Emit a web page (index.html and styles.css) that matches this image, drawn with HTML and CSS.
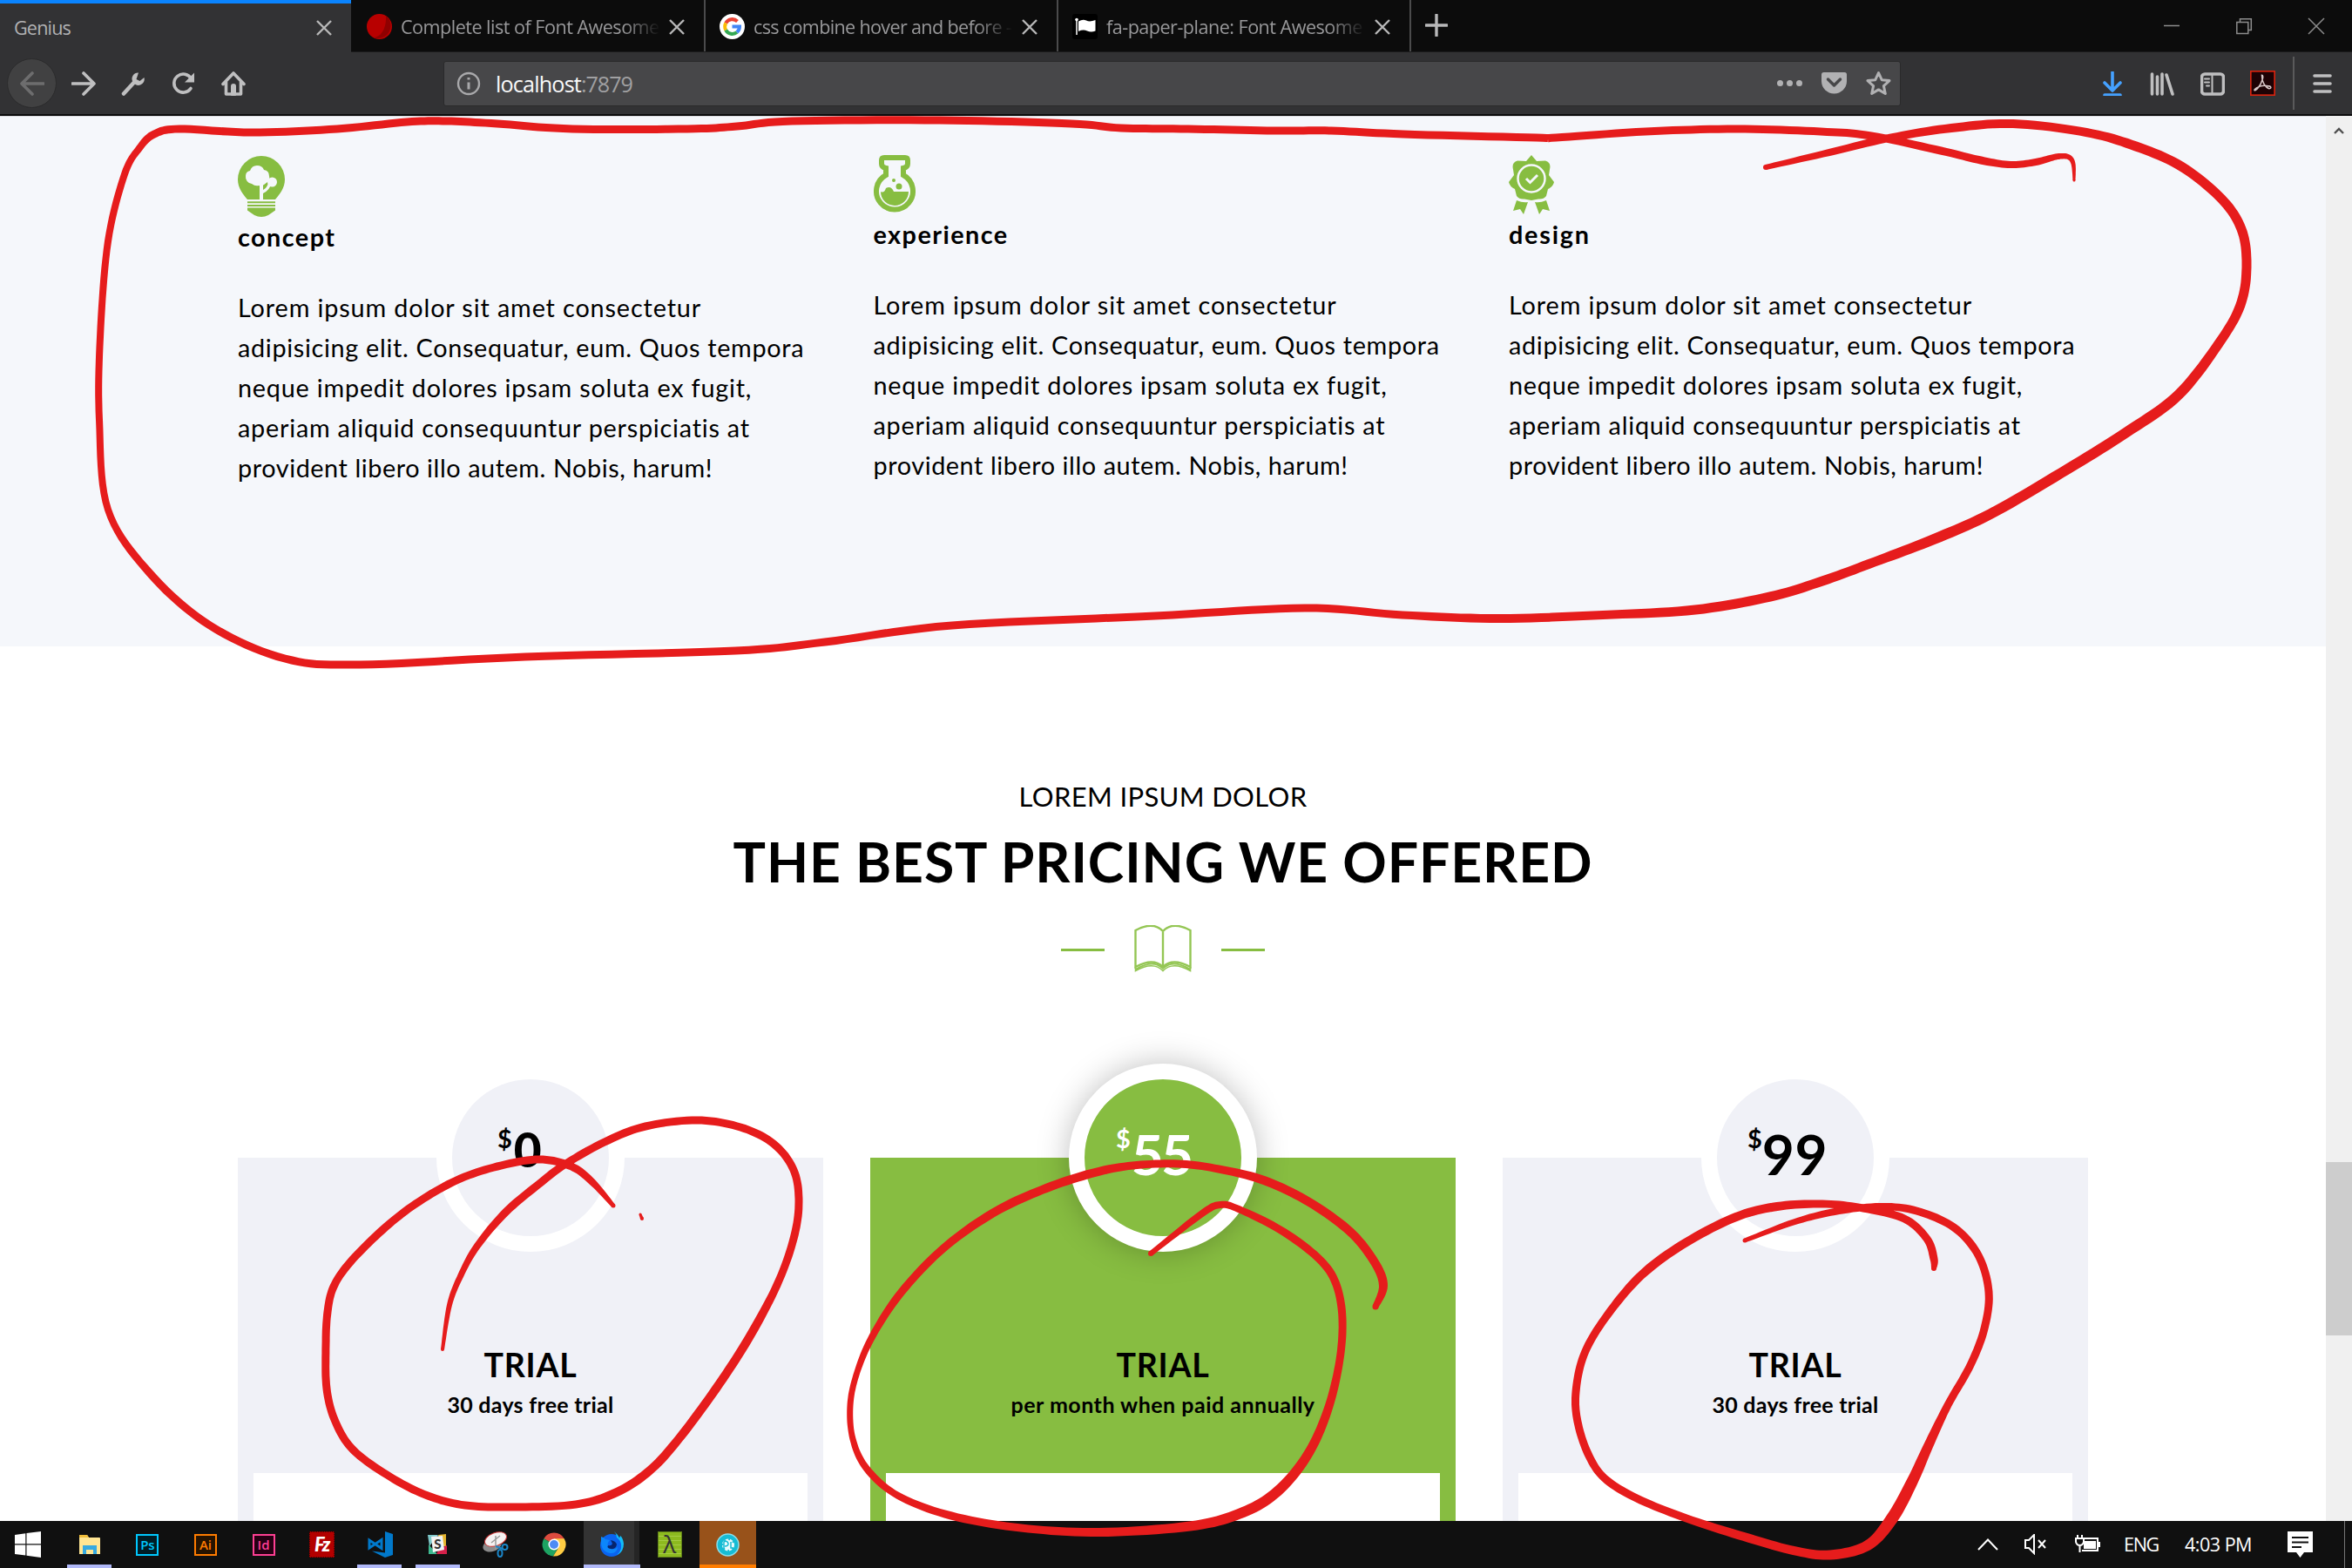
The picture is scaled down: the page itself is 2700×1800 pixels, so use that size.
FILE: index.html
```html
<!DOCTYPE html>
<html lang="en">
<head>
<meta charset="utf-8">
<title>Genius</title>
<link rel="stylesheet" href="styles.css">
</head>
<body>
<div class="screen">
  <header class="tabs">
    <div class="tab active"><span class="label t-genius">Genius</span><svg class="x" viewBox="0 0 18 18"><path d="M1 1l16 16M17 1L1 17"/></svg></div>
    <div class="tab"><svg class="fav" viewBox="0 0 29 29"><circle cx="14.500" cy="14.500" r="14.500" fill="#b80000"/><path d="M22 2a14.500 14.500 0 0 1-14 25c8 0 15-10 14-25z" fill="#8f0000"/></svg><span class="label fade t-list">Complete list of Font Awesome</span><svg class="x" viewBox="0 0 18 18"><path d="M1 1l16 16M17 1L1 17"/></svg></div>
    <div class="tab"><svg class="fav" viewBox="0 0 29 29"><circle cx="14.500" cy="14.500" r="14.500" fill="#fff"/><g fill="none" stroke-width="4"><path d="M20.500 8.500A8.500 8.500 0 0 0 7.200 10.500" stroke="#ea4335"/><path d="M7.200 10.500a8.500 8.500 0 0 0 0 8" stroke="#fbbc05"/><path d="M7.200 18.500a8.500 8.500 0 0 0 12.800 2.500" stroke="#34a853"/><path d="M20 21a8.500 8.500 0 0 0 3-6.500h-8.500" stroke="#4285f4"/></g></svg><span class="label fade t-css">css combine hover and before -</span><svg class="x" viewBox="0 0 18 18"><path d="M1 1l16 16M17 1L1 17"/></svg></div>
    <div class="tab"><svg class="fav" viewBox="0 0 29 29"><rect width="29" height="29" rx="3" fill="#000"/><path d="M5 6v18" stroke="#fff" stroke-width="1.500"/><circle cx="5" cy="6.500" r="1.800" fill="#fff"/><path d="M7 8.500q5-3 9-1t10.500-.5v12.500q-5 2-9.500 0T7 20z" fill="#fff"/></svg><span class="label fade t-list">fa-paper-plane: Font Awesome</span><svg class="x" viewBox="0 0 18 18"><path d="M1 1l16 16M17 1L1 17"/></svg></div>
    <svg class="plus" viewBox="0 0 26 26"><path d="M13 1v24M1 13h24"/></svg>
    <div class="window-buttons">
      <svg viewBox="0 0 18 18"><path d="M0 8.500h18"/></svg>
      <svg viewBox="0 0 18 18"><path d="M.8 4.500h13v13h-13zM4.500 4.500V.8h12.800v12.800h-3.500"/></svg>
      <svg viewBox="0 0 18 18"><path d="M0 0l18 18M18 0L0 18"/></svg>
    </div>
  </header>

  <nav class="toolbar">
    <div class="tools">
      <span class="back"><svg class="ico dim" viewBox="0 0 28 28"><path d="M27 14H2M14 2L2 14l12 12"/></svg></span>
      <svg class="ico" viewBox="0 0 28 28"><path d="M1 14h25M14 2l12 12-12 12"/></svg>
      <svg class="ico" viewBox="0 0 28 28"><path d="M3 25.500L14.500 13" stroke-width="4.500"/><path d="M20 1.500a7 7 0 0 0-6.500 10.500l3 3A7 7 0 0 0 26.500 7l-5 4-4-2z" fill="#bfbfc0" stroke="none"/></svg>
      <svg class="ico" viewBox="0 0 28 28"><path d="M22 19.500A10.500 10.500 0 1 1 22.500 8.500"/><path d="M26 1.500v11H15z" fill="#bfbfc0" stroke="none"/></svg>
      <svg class="ico" viewBox="0 0 28 28"><path d="M2 14.500L14 2l12 12.500M5.500 12v14h17V12"/><path d="M14 26v-9" stroke-width="6"/></svg>
    </div>
    <div class="address">
      <svg class="info" viewBox="0 0 28 28"><circle cx="14" cy="14" r="12"/><path d="M14 12.500v8M14 7v2.500" stroke-width="3"/></svg>
      <span class="url"><span class="host">localhost</span><span class="port">:7879</span></span>
      <div class="page-actions">
        <svg viewBox="0 0 29 29"><g fill="#b1b1b3"><circle cx="3.500" cy="14.500" r="3.500"/><circle cx="14.500" cy="14.500" r="3.500"/><circle cx="25.500" cy="14.500" r="3.500"/></g></svg>
        <svg viewBox="0 0 29 29"><path d="M2.500 2h24q2.500 0 2.500 2.500V12a14.500 14.500 0 0 1-29 0V4.500Q0 2 2.500 2z" fill="#b1b1b3"/><path d="M7.500 10l7 7 7-7" fill="none" stroke="#474749" stroke-width="3.500" stroke-linecap="round" stroke-linejoin="round"/></svg>
        <svg viewBox="0 0 29 29"><path d="M14.500 2.500l3.700 8.200 8.800.9-6.600 6 1.900 8.900-7.800-4.600-7.800 4.600 1.900-8.900-6.600-6 8.800-.9z" fill="none" stroke="#b1b1b3" stroke-width="3" stroke-linejoin="round"/></svg>
      </div>
    </div>
    <div class="extras">
      <svg class="ico blue" viewBox="0 0 28 28"><path d="M14 1v20M5 13l9 9 9-9M5 27h18"/></svg>
      <svg class="ico" viewBox="0 0 28 28"><path d="M2.500 3v23M8.500 6v20M14 3v23M19 4l7 22"/></svg>
      <svg class="ico" viewBox="0 0 28 28"><rect x="1.500" y="3" width="25" height="23" rx="3.500"/><path d="M13.500 3v23M5 8.500h5M5 12.500h5M7 16.500h3" stroke-width="2"/></svg>
      <svg class="pdf" viewBox="0 0 28 28"><rect x=".8" y=".8" width="26.400" height="26.400" fill="#1d0205" stroke="#d6230f" stroke-width="1.600"/><path d="M13 5c3 0 0 9-4 14-2 3-5 4-4 2 2-3 9-5 14-4 5 0 5 3 2 3-4-1-8-7-8-15z" fill="none" stroke="#d9c9c9" stroke-width="1.500"/></svg>
      <span class="rule"></span>
      <svg class="ico menu" viewBox="0 0 22 22"><path d="M2 2h18M2 11h18M2 20h18"/></svg>
    </div>
  </nav>

  <div class="viewport">
    <main class="page">
      <section class="features">
        <article class="feature">
          <svg class="bulb" viewBox="0 0 54 70"><path d="M27 0a27 27 0 0 1 27 27c0 10-6 17-11 23H11C6 44 0 37 0 27A27 27 0 0 1 27 0z" fill="#87bd41"/><path d="M11 53.200h32M11 57h32" stroke="#87bd41" stroke-width="2"/><path d="M11 59.500h32v3L35 68q-8 4-16 0l-8-5.500z" fill="#87bd41"/><g fill="#f5f7fb"><path d="M16 32a8 8 0 0 1-7-9q0-5 5-6 2-6 8-6 6 0 8 5 6 1 6 7 1 4-2 7l-4 3q-3 2-6 1-4 1-8-2z"/><circle cx="39.500" cy="30" r="5.500"/><path d="M25 30h4v9q5-3 6-8l3 1q-1 7-9 11v7h-4z"/></g></svg>
          <h3 class="t-concept">concept</h3>
          <p class="copy"><span class="l1">Lorem ipsum dolor sit amet consectetur</span> <span class="l2">adipisicing elit. Consequatur, eum. Quos tempora</span> <span class="l3">neque impedit dolores ipsam soluta ex fugit,</span> <span class="l4">aperiam aliquid consequuntur perspiciatis at</span> <span class="l5">provident libero illo autem. Nobis, harum!</span></p>
        </article>
        <article class="feature">
          <svg class="flask" viewBox="0 0 48 66"><path d="M12 3h24q3 0 3 3v4q0 4-5 5v8a21 21 0 1 1-20 0v-8q-5-1-5-5V6q0-3 3-3z" fill="none" stroke="#87bd41" stroke-width="6"/><path d="M8 42q4 2 6-4 6-3 9 4l17 0a16 16 0 0 1-32 0z" fill="#87bd41"/><circle cx="29" cy="36" r="3.500" fill="#87bd41"/><circle cx="23" cy="29" r="2" fill="#87bd41"/></svg>
          <h3 class="t-concept">experience</h3>
          <p class="copy"><span class="l1">Lorem ipsum dolor sit amet consectetur</span> <span class="l2">adipisicing elit. Consequatur, eum. Quos tempora</span> <span class="l3">neque impedit dolores ipsam soluta ex fugit,</span> <span class="l4">aperiam aliquid consequuntur perspiciatis at</span> <span class="l5">provident libero illo autem. Nobis, harum!</span></p>
        </article>
        <article class="feature">
          <svg class="ribbon" viewBox="0 0 52 68"><path d="M26 0l6 7 10-.5q7 2 5 10L46 23l6 8q-1 5-7 8l-2 8q-3 4-9 3.500L26 52l-8-1.500Q12 51 9 47l-2-8Q1 36 0 31l6-8-1-6.500Q3 8.500 10 6.500L20 7z" fill="#87bd41"/><circle cx="26" cy="27" r="15.500" fill="none" stroke="#f5f7fb" stroke-width="2.500"/><path d="M20 27l4.500 4.500L33 23" fill="none" stroke="#f5f7fb" stroke-width="3"/><path d="M9 52q7 3 13 2l-5 14-4-6-8 2zM43 52q-7 3-13 2l5 14 4-6 8 2z" fill="#87bd41"/></svg>
          <h3 class="t-design">design</h3>
          <p class="copy"><span class="l1">Lorem ipsum dolor sit amet consectetur</span> <span class="l2">adipisicing elit. Consequatur, eum. Quos tempora</span> <span class="l3">neque impedit dolores ipsam soluta ex fugit,</span> <span class="l4">aperiam aliquid consequuntur perspiciatis at</span> <span class="l5">provident libero illo autem. Nobis, harum!</span></p>
        </article>
      </section>

      <section class="pricing">
        <p class="eyebrow">LOREM IPSUM DOLOR</p>
        <h2>THE BEST PRICING WE OFFERED</h2>
        <div class="divider"><i></i><svg viewBox="0 0 66 54"><path d="M1.500 6Q22-5 33 7 44-5 64.500 6v42Q44 37 33 48 22 37 1.500 48z" stroke-width="2.400"/><path d="M33 8v40" stroke-width="2.400"/><path d="M1.500 48v4.500Q22 41 33 52.500 44 41 64.500 52.500V48M2 50.500Q22 39 33 50 44 39 64 50.500" stroke-width="1.600"/></svg><i></i></div>
        <div class="plans">
          <article class="plan">
            <div class="badge zero"><sup>$</sup><b>0</b></div>
            <h4>TRIAL</h4>
            <p class="term t-days">30 days free trial</p>
            <div class="sheet"></div>
          </article>
          <article class="plan featured">
            <div class="badge"><sup>$</sup><b>55</b></div>
            <h4>TRIAL</h4>
            <p class="term t-month">per month when paid annually</p>
            <div class="sheet"></div>
          </article>
          <article class="plan">
            <div class="badge wide"><sup>$</sup><b>99</b></div>
            <h4>TRIAL</h4>
            <p class="term t-days">30 days free trial</p>
            <div class="sheet"></div>
          </article>
        </div>
      </section>
    </main>
    <aside class="scrollbar"><svg viewBox="0 0 12 8"><path d="M1 7l5-5 5 5"/></svg><div class="thumb"></div></aside>
  </div>

  <footer class="taskbar">
    <div class="start"><svg width="30" height="30" viewBox="0 0 30 30"><path d="M0 4l12.300-1.700v12H0zM13.500 2L30 0v14.300H13.500zM0 15.500h12.300v12L0 26zM13.500 15.500H30V30l-16.500-2.200z" fill="#fff"/></svg></div>
    <div class="app open"><svg width="26" height="24" viewBox="0 0 26 24"><path d="M1 1h9l2 3h12q1 0 1 1v18H1z" fill="#ffe593"/><path d="M1 1h9l2 3H1z" fill="#f0bd3b"/><path d="M5 23V13h16v10h-4v-5H9v5z" fill="#35a9e1"/></svg></div>
    <div class="app"><span class="adobe ps">Ps</span></div>
    <div class="app"><span class="adobe ai">Ai</span></div>
    <div class="app"><span class="adobe id">Id</span></div>
    <div class="app"><span class="fz">Fz</span></div>
    <div class="app open"><svg width="30" height="30" viewBox="0 0 30 30"><path d="M21 0l9 3v24l-9 3L6 22.500l15 2z" fill="#0179cb"/><path d="M17 9.500v10L3 10v9z" fill="none" stroke="#0179cb" stroke-width="3"/></svg></div>
    <div class="app open"><svg width="26" height="26" viewBox="0 0 26 26"><path d="M2 2h12L4 15z" fill="#7ec8c9"/><path d="M14 2l9-1v14h-5z" fill="#e6b52f"/><path d="M3 13v11h10z" fill="#3eb890"/><path d="M12 24h12V14l-9 4z" fill="#d5204a"/><path d="M6 4l13-1 2 16-13 3z" fill="#f4f4f4"/><text x="13.500" y="18" text-anchor="middle" font-family="Lato" font-weight="900" font-size="15" fill="#333">S</text></svg></div>
    <div class="app"><svg width="30" height="30" viewBox="0 0 30 30"><ellipse cx="11" cy="16" rx="11" ry="7" fill="#8b8b8b" transform="rotate(-20 11 16)"/><ellipse cx="15" cy="9" rx="13" ry="7.500" fill="#f5f2f2" stroke="#c33" transform="rotate(-20 15 9)"/><path d="M10 13l10-8M15 5v16" stroke="#999" stroke-width="1.500"/><path d="M15 17l8 3" stroke="#1b86c8" stroke-width="2"/><circle cx="25.500" cy="18" r="3" fill="none" stroke="#1b86c8" stroke-width="2"/><ellipse cx="20" cy="25" rx="2.500" ry="4" fill="none" stroke="#1b86c8" stroke-width="2"/></svg></div>
    <div class="app"><svg width="28" height="28" viewBox="0 0 28 28"><path d="M14 14L2.300 7.200A13.500 13.500 0 0 1 25.700 7.300z" fill="#dd4b3e"/><path d="M14 14L2.300 7.200A13.500 13.500 0 0 0 13 27.500l6-10z" fill="#1da362"/><path d="M14 14l5 4-6 9.500A13.500 13.500 0 0 0 25.700 7.300H14z" fill="#ffcd43"/><circle cx="14" cy="14" r="6.500" fill="#fff"/><circle cx="14" cy="14" r="5" fill="#4c8bf5"/></svg></div>
    <div class="app current"><svg width="28" height="30" viewBox="0 0 28 30"><circle cx="14" cy="16" r="13" fill="#0a63f0"/><path d="M17 0q3 3 3 7 6 4 5 12a12 12 0 0 1-5 8q8-3 8-13-1-7-4-9l-1 3q-2-5-6-8z" fill="#12bdf8"/><path d="M2 6q4 1 5 3l5 1q-5 5 0 9 5 3 9-1-1 8-9 7Q3 23 2 14z" fill="#0c86fb"/><path d="M13 10q6 1 7 5-1 6-7 5-5-1-3-4 4 1 5-2z" fill="#07256e"/></svg></div>
    <div class="app"><span class="lambda">λ</span></div>
    <div class="app alert"><svg width="27" height="27" viewBox="0 0 27 27"><circle cx="13.500" cy="13.500" r="12.500" fill="#16bcd4" stroke="#8ddde8" stroke-width="1.500"/><circle cx="14" cy="13.500" r="5.500" fill="#e9fbfd" stroke="#e9fbfd" stroke-width="3" stroke-dasharray="3 1.500"/><path d="M9 18v-8q4-2 5 2 0 3-4 3M17 10v7h3" fill="none" stroke="#16bcd4" stroke-width="1.500"/></svg></div>
    <div class="tray">
      <svg class="chev" viewBox="0 0 24 14"><path d="M1 13L12 1.500 23 13"/></svg>
      <svg class="spk" viewBox="0 0 26 24"><path d="M1 7h4l6-6v21l-6-6H1zM16 7l8 9M24 7l-8 9"/></svg>
      <svg class="bat" viewBox="0 0 30 22"><path d="M8 4h18v14H8M28 8v6" /><path d="M10 7h14v9H10z" fill="#fff" stroke="none"/><path d="M1 4h9v4q-1 4-4.500 4T1 8zM3 0v4M8 0v4M5.500 12v8" fill="#101010"/></svg>
      <span class="lang">ENG</span>
      <span class="clock">4:03 PM</span>
      <svg class="note" viewBox="0 0 29 30"><path d="M0 0h29v24H19l-4.500 6-4.500-6H0z" fill="#fff"/><path d="M5 7h19M5 12.500h19M5 18h11" stroke="#101010" stroke-width="2"/></svg>
      <span class="peek"></span>
    </div>
  </footer>

  <svg class="ink" viewBox="0 0 2700 1800" aria-hidden="true"></svg>
</div>
<script src="ink.js"></script>
</body>
</html>
```
FILE: styles.css
```css
* { box-sizing: border-box; margin: 0; padding: 0; }
body { width: 2700px; height: 1800px; overflow: hidden; background: #fff; font-family: Lato, "Open Sans", sans-serif; color: #000; }
svg { display: block; flex: none; }
.screen { position: relative; display: flex; flex-direction: column; width: 2700px; height: 1800px; overflow: hidden; }

/* tab strip */
.tabs { flex: none; display: flex; height: 60px; background: #0c0c0c; border-bottom: 1px solid #1c1c1d; font: 21.6px/28px "Open Sans", sans-serif; color: #98989a; }
.tab { display: flex; align-items: center; width: 405px; padding: 2px 22px 0 16px; border-right: 2px solid #4b4b4c; white-space: nowrap; }
.tab.active { width: 403px; height: 60px; padding-top: 0; border-right: 0; border-top: 4px solid #0a84ff; background: #323234; color: #b1b1b3; }
.tab:nth-child(2) { width: 407px; padding-left: 18px; }
.label { flex: 1; overflow: hidden; }
.fade { -webkit-mask-image: linear-gradient(90deg, #000 86%, transparent); mask-image: linear-gradient(90deg, #000 86%, transparent); }
.t-genius { letter-spacing: -.84px; }
.t-list { letter-spacing: -.52px; }
.t-css { letter-spacing: -.67px; }
.fav { width: 29px; height: 29px; margin-right: 10px; }
.x { width: 18px; height: 18px; margin-left: 10px; fill: none; stroke: #b8b8b9; stroke-width: 2.4; }
.plus { width: 26px; height: 26px; margin: 16px 0 0 16px; fill: none; stroke: #b8b8b9; stroke-width: 3.4; stroke-linecap: round; }
.window-buttons { display: flex; gap: 65px; margin: 21px 32px 0 auto; }
.window-buttons svg { width: 18px; height: 18px; fill: none; stroke: #8d8d8d; stroke-width: 1.5; overflow: visible; }

/* toolbar */
.toolbar { flex: none; display: flex; align-items: center; height: 73px; background: #323234; border-bottom: 2px solid #0b0b0c; }
.tools { flex: none; display: flex; align-items: center; gap: 29.500px; width: 509px; padding-left: 8px; }
.back { display: grid; place-items: center; width: 57px; height: 57px; margin-right: -13px; border-radius: 50%; background: #414142; border: 1px solid #2b2b2c; }
.ico { width: 28px; height: 28px; fill: none; stroke: #bfbfc0; stroke-width: 3.6; stroke-linecap: round; stroke-linejoin: round; }
.ico.dim { stroke: #6d6d6e; }
.ico.blue { stroke: #45a1ff; }
.address { flex: none; display: flex; align-items: center; width: 1673px; height: 52px; padding: 0 10px 0 14px; background: #474749; border: 1px solid #2a2a2b; border-radius: 3px; font: 25.2px/34px "Open Sans", sans-serif; }
.info { width: 28px; height: 28px; fill: none; stroke: #a9a9ab; stroke-width: 2.4; }
.url { margin-left: 17px; white-space: nowrap; }
.host { color: #f9f9fa; letter-spacing: -.84px; }
.port { color: #a0a0a2; letter-spacing: -1.05px; }
.page-actions { display: flex; gap: 22px; margin-left: auto; }
.page-actions svg { width: 29px; height: 29px; }
.extras { display: flex; align-items: center; gap: 29.500px; margin-left: auto; padding-right: 23px; }
.pdf { width: 29px; height: 29px; }
.rule { width: 2px; height: 61px; margin: 0 -8px 0 -10px; background: #5a5a5b; }
.menu { width: 22px; height: 22px; }

/* page */
.viewport { flex: 1; display: flex; min-height: 0; }
.page { flex: 1; min-width: 0; overflow: hidden; background: #fff; }
.features { display: grid; grid-template-columns: 729.500px 729.500px 1fr; height: 609px; padding: 44px 0 0 273px; background: #f5f7fb; border-top: 1px solid #dcdce0; }
.feature svg { overflow: visible; }
.bulb { width: 54px; height: 70px; margin: 1px 0 6px; }
.flask { width: 48px; height: 66px; margin-bottom: 8px; }
.ribbon { width: 52px; height: 68px; margin-bottom: 6px; }
h3 { width: max-content; font-size: 28.8px; line-height: 34px; font-weight: 700; }
.t-concept { letter-spacing: 1.45px; }
.t-design { letter-spacing: 1.75px; }
.copy { margin-top: 41px; font-size: 28.8px; line-height: 46px; white-space: nowrap; }
.copy span { display: block; width: max-content; }
.l1 { letter-spacing: .87px; }
.l2 { letter-spacing: .68px; }
.l3 { letter-spacing: .79px; }
.l4 { letter-spacing: .77px; }
.l5 { letter-spacing: .58px; }

.pricing { padding: 152px 273px 0; text-align: center; }
.eyebrow { font-size: 31px; line-height: 40px; letter-spacing: .36px; }
h2 { margin-top: 17px; font-size: 62.5px; line-height: 76px; font-weight: 700; letter-spacing: .92px; white-space: nowrap; }
.divider { display: flex; align-items: center; justify-content: center; gap: 34px; height: 54px; margin-top: 35px; }
.divider i { width: 50px; height: 3px; margin-top: 3px; background: #87bd41; }
.divider svg { width: 66px; height: 54px; fill: none; stroke: #94c654; }
.plans { display: grid; grid-template-columns: repeat(3, 672px); gap: 54px; margin-top: 213px; }
.plan { height: 460px; background: #f0f1f7; }
.badge { display: flex; align-items: flex-start; width: 216px; height: 216px; margin: -108px auto 0; padding: 54px 0 0 36px; border: 18px solid #fff; border-radius: 50%; background: #f0f1f7; }
.badge sup { margin: -4px 1px 0 0; font-size: 29px; line-height: 36px; font-weight: 700; vertical-align: baseline; }
.badge b { font-size: 64px; line-height: 64px; letter-spacing: -3px; }
.badge.zero { padding: 48px 0 0 52px; }
.badge.zero sup { margin: 2px 2px 0 0; }
.badge.zero b { font-size: 55px; font-weight: 900; }
.badge.wide { padding-left: 35px; }
.badge.wide sup { margin-right: 0; }
.badge.wide b { letter-spacing: .5px; }
.featured { background: #87bd41; }
.featured .badge { background: #87bd41; color: #fff; box-shadow: 0 0 36px rgba(0, 0, 0, .25); }
h4 { margin-top: 107px; font-size: 37.5px; line-height: 45px; font-weight: 700; letter-spacing: .75px; }
.term { margin-top: 7px; font-size: 25px; line-height: 32px; font-weight: 700; }
.t-days { letter-spacing: .27px; }
.t-month { letter-spacing: .5px; }
.sheet { height: 100px; margin: 63px 18px 0; background: #fff; }

.scrollbar { flex: none; width: 30px; padding-top: 13px; background: #f0f0f0; }
.scrollbar svg { width: 12px; height: 8px; margin: 0 auto; fill: none; stroke: #505050; stroke-width: 2.4; }
.thumb { height: 199px; margin-top: 1180px; background: #cdcdcd; }

/* taskbar */
.taskbar { flex: none; display: flex; height: 54px; background: #101010; color: #fff; }
.start { display: grid; place-items: center; width: 69.500px; padding-right: 5px; }
.app { display: grid; place-items: center; width: 66.600px; }
.open { background: linear-gradient(#b1b9f9, #b1b9f9) center bottom / 51px 4px no-repeat; }
.current { background: linear-gradient(#b1b9f9, #b1b9f9) center bottom / 65px 4px no-repeat, linear-gradient(90deg, #101010 1px, #333 1px 59px, #252525 59px 65px, #101010 65px); }
.alert { background: linear-gradient(#ff7d00, #ff7d00) center bottom / 65px 4px no-repeat, linear-gradient(90deg, #101010 1px, #98521a 1px 65.500px, #101010 65.500px); }
.adobe { width: 26px; height: 25px; border: 2px solid; font: 600 15px/20px "Open Sans", sans-serif; text-align: center; }
.ps { color: #00c8ff; background: #001d26; }
.ai { color: #ff7c00; background: #261300; }
.id { color: #ff3f93; background: #260013; }
.fz { width: 29px; height: 30px; background: #b30000; border: 1px dotted #4d0000; font: italic 900 22px/28px Lato, sans-serif; letter-spacing: -2px; text-align: center; }
.lambda { width: 28px; height: 30px; border: 1px solid #5f7f19; background: repeating-linear-gradient(#8dba1f 0 4px, #a5cc45 4px 5px); color: #333; font: 28px/27px "Open Sans", sans-serif; text-align: center; }
.tray { display: flex; align-items: center; margin-left: auto; font: 21.6px/28px "Open Sans", sans-serif; white-space: nowrap; }
.tray svg { fill: none; stroke: #fff; stroke-width: 2; }
.chev { width: 24px; height: 14px; }
.spk { width: 26px; height: 24px; margin-left: 30px; }
.bat { width: 30px; height: 22px; margin-left: 32px; }
.lang { margin-left: 26px; letter-spacing: -1.32px; }
.clock { margin-left: 30px; letter-spacing: -.53px; }
.tray .note { width: 29px; height: 30px; margin-left: 41px; stroke: none; }
.peek { width: 1px; height: 54px; margin: 0 8px 0 36px; background: #777; }

.ink { position: absolute; inset: 0; width: 2700px; height: 1800px; fill: #e61c1c; pointer-events: none; }
```
FILE: ink.js
```js
// Freehand pen strokes: each point is x, y, pen width.
const strokes = [
  [[2027,192,6],[2100,175,8],[2171,158,9],[2240,147,10],[2311,142,10],[2395,152,10],[2452,168,11],[2504,191,11],[2550,228,11],[2573,263,11],[2579,303,11],[2573,347,11],[2550,390,11],[2501,453,12],[2440,497,12],[2366,543,12],[2285,590,12],[2220,619,12],[2152,645,11],[2092,667,11],[2032,685,11],[1946,700,11],[1840,706,10],[1722,710,10],[1610,706,9],[1498,698,9],[1326,707,9],[1093,718,9],[947,737,9],[844,747,9],[603,754,9],[413,763,9],[327,756,9],[241,718,9],[172,658,9],[124,585,8],[114,482,8],[115,387,8],[124,277,8],[143,200,8],[160,170,8],[177,154,9],[206,148,9],[289,152,9],[387,148,9],[467,140,9],[513,139,9],[571,142,9],[657,148,9],[789,148,9],[846,145,9],[909,139,9],[1078,138,9],[1230,142,9],[1287,147,9],[1364,148,9],[1463,150,9],[1528,150,9],[1611,154,9],[1764,158,9],[1786,158,9],[1889,151,9],[1993,148,9],[2090,151,9],[2148,156,9],[2228,173,9],[2274,184,9],[2308,189,8],[2337,186,8],[2360,180,7],[2374,180,6],[2380,188,5],[2381,207,3]],
  [[508,1549,4],[516,1498,6],[529,1464,7],[548,1430,8],[581,1391,9],[619,1359,9],[648,1337,9],[694,1311,9],[741,1293,9],[800,1286,9],[850,1294,9],[888,1313,9],[911,1343,9],[917,1380,9],[911,1422,9],[892,1475,9],[859,1537,10],[822,1594,10],[779,1652,10],[746,1688,10],[708,1713,10],[661,1727,9],[590,1730,9],[534,1728,9],[491,1717,9],[449,1696,9],[406,1665,9],[385,1632,9],[375,1594,9],[374,1544,9],[376,1506,9],[383,1477,9],[402,1449,9],[439,1412,9],[477,1382,9],[524,1355,9],[571,1339,9],[619,1331,9],[656,1339,9],[680,1357,8],[704,1384,5]],
  [[735,1394,3],[737,1399,4]],
  [[1321,1439,6],[1380,1393,8],[1401,1383,8],[1422,1388,8],[1470,1412,9],[1512,1443,9],[1533,1472,9],[1541,1514,9],[1537,1567,9],[1522,1625,10],[1498,1675,11],[1463,1715,12],[1422,1738,12],[1366,1752,11],[1262,1759,10],[1172,1754,9],[1092,1740,9],[1031,1717,8],[995,1686,8],[979,1652,7],[976,1613,7],[984,1575,7],[1002,1533,8],[1035,1483,9],[1083,1433,9],[1139,1393,10],[1196,1366,10],[1253,1347,10],[1300,1338,9],[1352,1336,9],[1399,1342,9],[1451,1355,10],[1503,1380,10],[1550,1414,10],[1578,1449,10],[1588,1476,10],[1579,1500,7]],
  [[2003,1424,5],[2059,1403,7],[2106,1391,8],[2158,1385,8],[2200,1390,9],[2243,1409,9],[2271,1441,9],[2283,1483,9],[2278,1525,9],[2262,1567,9],[2236,1613,9],[2214,1659,11],[2195,1701,13],[2172,1743,14],[2144,1774,12],[2101,1785,11],[2059,1780,10],[2002,1764,10],[1936,1743,9],[1879,1720,9],[1842,1697,9],[1823,1669,9],[1811,1632,9],[1809,1598,9],[1818,1556,9],[1842,1514,9],[1884,1464,10],[1936,1426,10],[1993,1397,10],[2040,1385,10],[2092,1382,9],[2139,1387,9],[2186,1399,9],[2212,1422,9],[2220,1445,9],[2220,1456,6]]
];

function spline(a, b, c, d, t) {
  return 0.5 * (2 * b + (c - a) * t + (2 * a - 5 * b + 4 * c - d) * t * t + (3 * b - a - 3 * c + d) * t * t * t);
}

function outline(points) {
  const samples = [];
  for (let i = 0; i < points.length - 1; i++) {
    const p = [points[Math.max(i - 1, 0)], points[i], points[i + 1], points[Math.min(i + 2, points.length - 1)]];
    for (let s = 0; s < 10; s++) samples.push([0, 1, 2].map(k => spline(p[0][k], p[1][k], p[2][k], p[3][k], s / 10)));
  }
  samples.push(points[points.length - 1]);
  const left = [], right = [];
  samples.forEach((q, i) => {
    const a = samples[Math.max(i - 1, 0)], b = samples[Math.min(i + 1, samples.length - 1)];
    const len = Math.hypot(b[0] - a[0], b[1] - a[1]) || 1;
    const nx = (a[1] - b[1]) / len * q[2] / 2, ny = (b[0] - a[0]) / len * q[2] / 2;
    left.push([q[0] + nx, q[1] + ny]);
    right.unshift([q[0] - nx, q[1] - ny]);
  });
  return 'M' + left.concat(right).map(q => q[0].toFixed(1) + ' ' + q[1].toFixed(1)).join('L') + 'Z';
}

const ink = document.querySelector('.ink');
const NS = 'http://www.w3.org/2000/svg';
strokes.forEach(points => {
  const path = document.createElementNS(NS, 'path');
  path.setAttribute('d', outline(points));
  ink.appendChild(path);
  [points[0], points[points.length - 1]].forEach(p => {
    const cap = document.createElementNS(NS, 'circle');
    cap.setAttribute('cx', p[0]);
    cap.setAttribute('cy', p[1]);
    cap.setAttribute('r', p[2] / 2);
    ink.appendChild(cap);
  });
});
```
